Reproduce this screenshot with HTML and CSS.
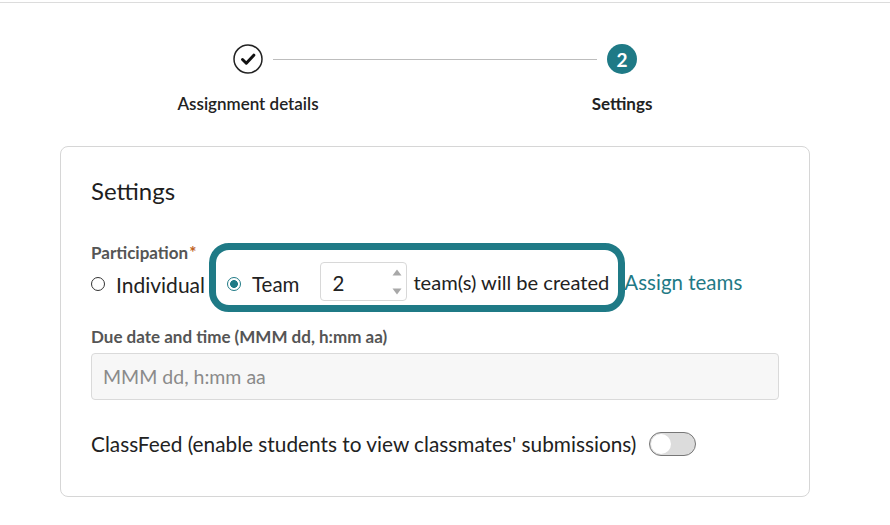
FILE: index.html
```html
<!DOCTYPE html>
<html>
<head>
<meta charset="utf-8">
<link rel="stylesheet" href="styles.css">
</head>
<body>
<div class="topbar"></div>
<div class="stepper">
  <div class="step-circle done">
    <svg width="30" height="30" viewBox="0 0 30 30"><circle cx="15" cy="15" r="14" fill="#fff" stroke="#222" stroke-width="1.5"/><path d="M9.5 15.5 L13.3 19.2 L20.8 11.2" fill="none" stroke="#111" stroke-width="3" stroke-linecap="round" stroke-linejoin="round"/></svg>
  </div>
  <div class="step-line"></div>
  <div class="step-circle current">2</div>
  <div class="step-label">Assignment details</div>
  <div></div>
  <div class="step-label active">Settings</div>
</div>

<div class="card">
  <h2 class="card-title">Settings</h2>
  <div class="field-label">Participation<span class="req">*</span></div>
  <div class="radio-row">
    <label class="radio individual"><span class="radio-dot"></span>Individual</label>
    <label class="radio team"><span class="radio-dot checked"></span>Team</label>
    <div class="num-input">
      <span class="num-value">2</span>
      <span class="spin">
        <svg width="12" height="30" viewBox="0 0 12 30"><path d="M1.5 8.5 L6 2.5 L10.5 8.5 Z" fill="#a8a8a8"/><path d="M1.5 21.5 L6 27.5 L10.5 21.5 Z" fill="#a8a8a8"/></svg>
      </span>
    </div>
    <span class="created">team(s) will be created</span>
    <a class="link">Assign teams</a>
    <div class="highlight"></div>
  </div>
  <div class="field-label due">Due date and time (MMM dd, h:mm aa)</div>
  <div class="text-input">MMM dd, h:mm aa</div>
  <div class="feed-row">
    <span>ClassFeed (enable students to view classmates' submissions)</span>
    <span class="toggle"><span class="knob"></span></span>
  </div>
</div>
</body>
</html>
```

FILE: styles.css
```css
* { box-sizing: border-box; }
body {
  margin: 0;
  background: #fff;
  font-family: Lato, "Open Sans", sans-serif;
  color: #222;
}
.topbar {
  height: 3px;
  border-bottom: 1px solid #dcdcdc;
}
.stepper {
  display: grid;
  grid-template-columns: 150px 1fr 150px;
  grid-template-rows: 30px 20px;
  row-gap: 20px;
  width: 524px;
  margin: 41px 0 0 173px;
}
.step-circle {
  justify-self: center;
  width: 30px;
  height: 30px;
  border-radius: 50%;
  display: flex;
  align-items: center;
  justify-content: center;
}
.step-circle.current {
  background: #1f7a86;
  color: #fff;
  font-size: 19px;
  font-weight: 700;
}
.step-line {
  align-self: center;
  height: 1px;
  background: #bdbdbd;
  margin: 0 -50px;
}
.step-label {
  text-align: center;
  font-size: 17px;
  line-height: 20px;
  font-weight: 600;
  color: #222;
  white-space: nowrap;
}
.step-label.active { font-weight: 700; }

.card {
  margin: 32px 0 0 60px;
  width: 750px;
  height: 351px;
  border: 1px solid #d6d6d6;
  border-radius: 8px;
  padding: 30px 30px 0;
}
.card-title {
  margin: 0;
  font-size: 24px;
  line-height: 28px;
  font-weight: 400;
  color: #1e1e1e;
}
.field-label {
  margin-top: 39px;
  font-size: 17px;
  line-height: 18px;
  font-weight: 700;
  color: #555;
}
.req { color: #c0621c; margin-left: 1px; }
.radio-row {
  position: relative;
  display: flex;
  align-items: center;
  height: 39px;
  font-size: 20.5px;
  color: #222;
  white-space: nowrap;
}
.radio {
  display: flex;
  align-items: center;
  gap: 11px;
  padding-top: 5px;
}
.radio.individual { font-size: 21px; }
.radio-dot {
  flex: none;
  width: 14px;
  height: 14px;
  border-radius: 50%;
  border: 1.5px solid #333;
  background: #fff;
}
.radio-dot.checked {
  border: 1.5px solid #1f7a86;
  background: radial-gradient(circle, #1f7a86 0 3.6px, #fff 4.2px);
}
.radio.team { margin-left: 22px; }
.num-input {
  margin-left: 21px;
  flex: none;
  width: 87px;
  height: 39px;
  border: 1px solid #d8d8d8;
  border-radius: 4px;
  display: flex;
  align-items: center;
  justify-content: space-between;
  padding: 0 3px 0 11px;
}
.num-value { padding-top: 2px; }
.spin { display: flex; }
.created { margin-left: 6px; font-size: 20.1px; }
.link {
  margin-left: 15px;
  color: #1f7a86;
}
.highlight {
  position: absolute;
  left: 118px;
  top: -19px;
  width: 416px;
  height: 69px;
  border: 7px solid #1f7a86;
  border-radius: 20px;
  pointer-events: none;
}
.field-label.due { margin-top: 27px; }
.text-input {
  margin-top: 7px;
  height: 47px;
  border: 1px solid #dadada;
  border-radius: 4px;
  background: #f7f7f7;
  display: flex;
  align-items: center;
  padding-left: 11px;
  font-size: 19.5px;
  color: #8a8a8a;
}
.feed-row {
  margin-top: 31px;
  display: flex;
  align-items: center;
  font-size: 20.8px;
  color: #222;
  white-space: nowrap;
}
.toggle {
  flex: none;
  margin-left: 13px;
  width: 47px;
  height: 24px;
  border-radius: 12px;
  background: #dcdcdc;
  border: 1px solid #777;
  position: relative;
}
.knob {
  position: absolute;
  left: 1px;
  top: 1px;
  width: 20px;
  height: 20px;
  border-radius: 50%;
  background: #fff;
}
```
